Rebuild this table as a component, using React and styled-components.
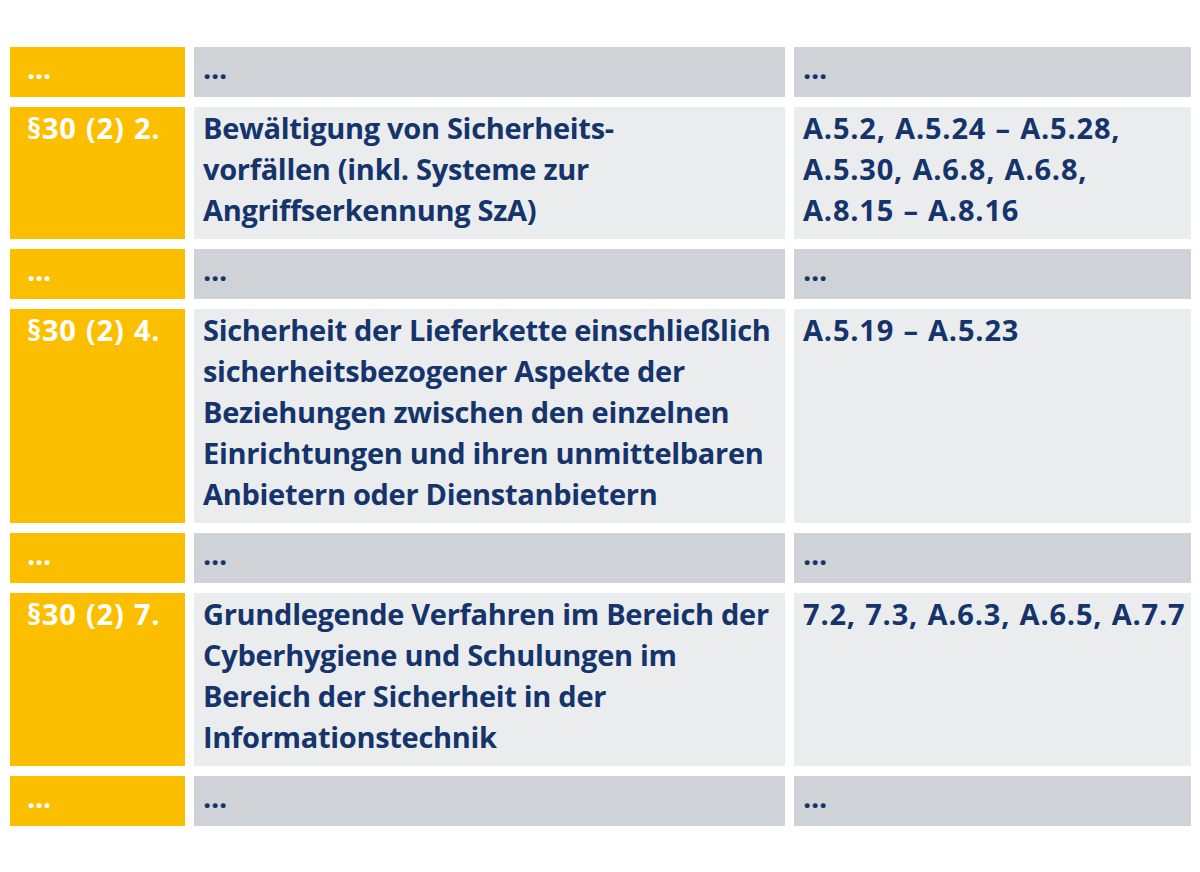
import styled, {createGlobalStyle} from "styled-components";

const GlobalStyle = createGlobalStyle`
  html, body {
    margin: 0;
    padding: 0;
    background: #ffffff;
  }

  body {
    font-family: "Open Sans", "Noto Sans", sans-serif;
  }
`;

const Page = styled.main`
  width: 1200px;
  height: 872px;
  box-sizing: border-box;
  padding: 47px 9px 0 10px;
`;

const Table = styled.div`
  display: grid;
  grid-template-columns: 175px 591px 397px;
  column-gap: 9px;
  row-gap: 10px;
`;

const Cell = styled.div`
  box-sizing: border-box;
  padding: ${({$first}) => ($first ? "0 8px 9px 17px" : "0 8px 9px 9px")};
  background-color: ${({$first, $muted}) =>
    $first ? "#fcbf00" : $muted ? "#cfd2d6" : "#ebecee"};
  color: ${({$first}) => ($first ? "#ffffff" : "#15346b")};
  font-size: 29px;
  font-weight: 700;
  line-height: 41px;
  letter-spacing: ${({$numeric}) => ($numeric ? "0.8px" : "-0.3px")};
  word-spacing: ${({$numeric}) => ($numeric ? "1px" : "0")};
  white-space: nowrap;
`;

const rows = [
  {gap: true},
  {
    para: "§30 (2) 2.",
    topic: [
      "Bewältigung von Sicherheits-",
      "vorfällen (inkl. Systeme zur",
      "Angriffserkennung SzA)",
    ],
    controls: ["A.5.2, A.5.24 – A.5.28,", "A.5.30, A.6.8, A.6.8,", "A.8.15 – A.8.16"],
  },
  {gap: true},
  {
    para: "§30 (2) 4.",
    topic: [
      "Sicherheit der Lieferkette einschließlich",
      "sicherheitsbezogener Aspekte der",
      "Beziehungen zwischen den einzelnen",
      "Einrichtungen und ihren unmittelbaren",
      "Anbietern oder Dienstanbietern",
    ],
    controls: ["A.5.19 – A.5.23"],
  },
  {gap: true},
  {
    para: "§30 (2) 7.",
    topic: [
      "Grundlegende Verfahren im Bereich der",
      "Cyberhygiene und Schulungen im",
      "Bereich der Sicherheit in der",
      "Informationstechnik",
    ],
    controls: ["7.2, 7.3, A.6.3, A.6.5, A.7.7"],
  },
  {gap: true},
];

function Lines({lines}) {
  return lines.map((line, index) => (
    <span key={index}>
      {index > 0 && <br />}
      {line}
    </span>
  ));
}

export default function App() {
  return (
    <>
      <GlobalStyle />
      <Page>
        <Table>
          {rows.map((row, index) =>
            row.gap ? (
              [
                <Cell key={`${index}a`} $first>...</Cell>,
                <Cell key={`${index}b`} $muted>...</Cell>,
                <Cell key={`${index}c`} $muted>...</Cell>,
              ]
            ) : (
              [
                <Cell key={`${index}a`} $first $numeric>{row.para}</Cell>,
                <Cell key={`${index}b`}>
                  <Lines lines={row.topic} />
                </Cell>,
                <Cell key={`${index}c`} $numeric>
                  <Lines lines={row.controls} />
                </Cell>,
              ]
            )
          )}
        </Table>
      </Page>
    </>
  );
}
